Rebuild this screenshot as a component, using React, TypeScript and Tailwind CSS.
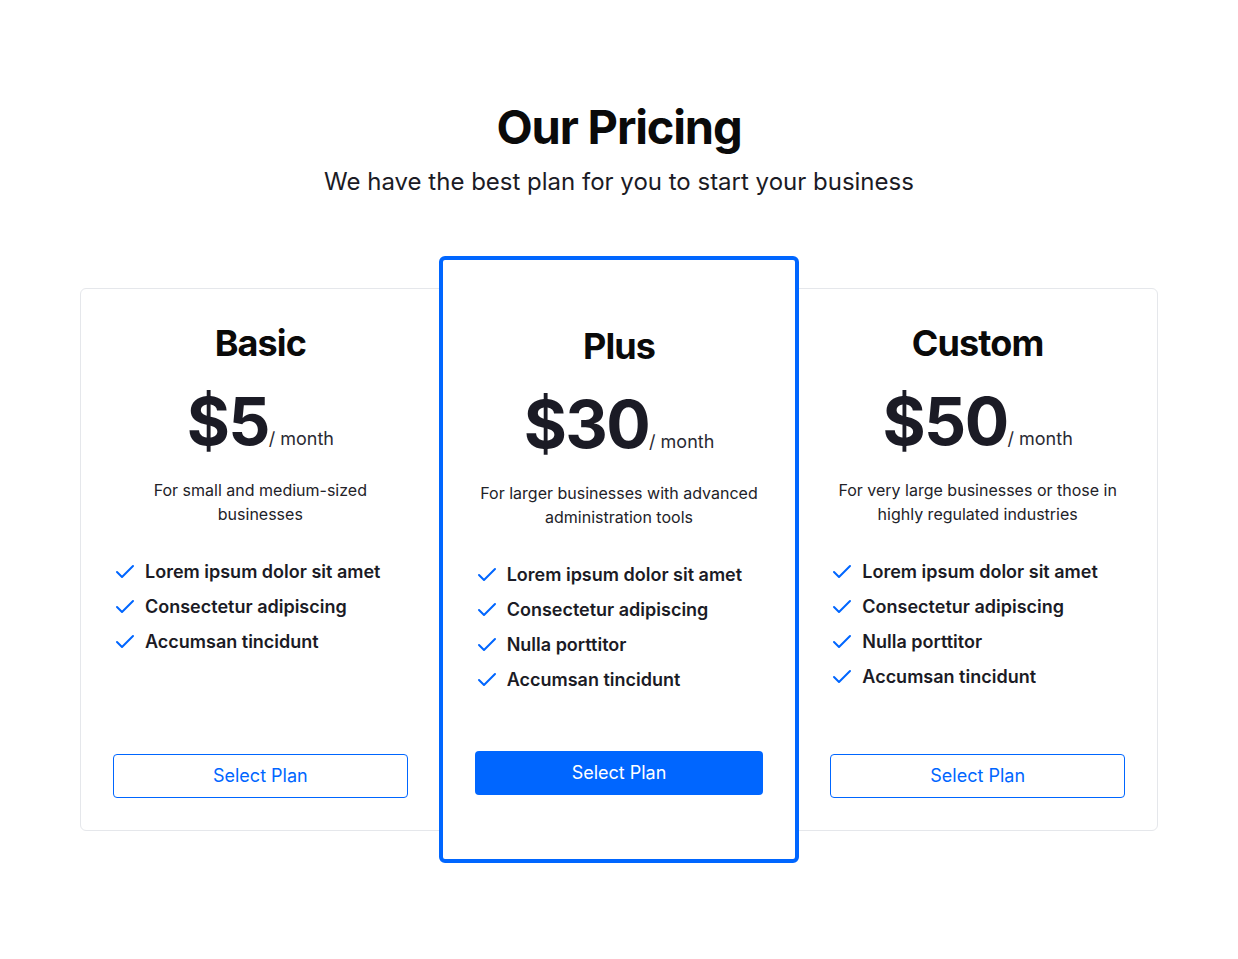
import { Check } from 'lucide-react';

type Plan = {
	name: string;
	price: string;
	description: string;
	features: string[];
	featured?: boolean;
};

const plans: Plan[] = [
	{
		name: 'Basic',
		price: '$5',
		description: 'For small and medium-sized businesses',
		features: ['Lorem ipsum dolor sit amet', 'Consectetur adipiscing', 'Accumsan tincidunt'],
	},
	{
		name: 'Plus',
		price: '$30',
		description: 'For larger businesses with advanced administration tools',
		features: ['Lorem ipsum dolor sit amet', 'Consectetur adipiscing', 'Nulla porttitor', 'Accumsan tincidunt'],
		featured: true,
	},
	{
		name: 'Custom',
		price: '$50',
		description: 'For very large businesses or those in highly regulated industries',
		features: ['Lorem ipsum dolor sit amet', 'Consectetur adipiscing', 'Nulla porttitor', 'Accumsan tincidunt'],
	},
];

function PlanCard({ plan }: { plan: Plan }) {
	return (
		<div
			className={
				plan.featured
					? 'min-w-0 flex flex-col bg-white border-4 border-[#0066ff] rounded-md -my-[33px] -mx-px px-8 pt-16 pb-16'
					: 'min-w-0 flex flex-col px-8 pt-8 pb-8'
			}
		>
			<h3 className="text-center text-[36px] leading-[44px] font-bold tracking-tight text-[#0a0a0a]">{plan.name}</h3>
			<div className="mt-[23px] flex items-baseline justify-center">
				<span className="text-[66px] leading-none font-bold tracking-tight text-[#1b1b25]">{plan.price}</span>
				<span className="text-lg text-[#2a2a33]">/ month</span>
			</div>
			<p className="mt-[24px] text-center text-base leading-6 text-[#222228]">{plan.description}</p>
			<ul className="mt-[32px] flex flex-col gap-[7px]">
				{plan.features.map((f) => (
					<li key={f} className="flex items-center gap-2 text-lg leading-7 font-semibold text-[#1b1b25]">
						<Check className="size-6 shrink-0 text-[#0066ff]" strokeWidth={2} />
						<span>{f}</span>
					</li>
				))}
			</ul>
			<button
				className={
					plan.featured
						? 'mt-auto h-11 w-full rounded-[4px] bg-[#0066ff] text-lg text-white'
						: 'mt-auto h-11 w-full rounded-[4px] border border-[#0066ff] bg-white text-lg text-[#0066ff]'
				}
			>
				Select Plan
			</button>
		</div>
	);
}

export default function App() {
	return (
		<div className="min-h-[959px] bg-white font-['Inter','Liberation_Sans',sans-serif] antialiased">
			<div className="flex flex-col items-center pt-[103px]">
				<h1 className="text-[47px] leading-[48px] font-bold tracking-tight text-[#0a0a0a]">Our Pricing</h1>
				<p className="mt-[15px] text-2xl leading-8 text-[#1b1b25]">We have the best plan for you to start your business</p>
				<div className="mt-[90px] w-[1078px] h-[543px] grid grid-cols-3 border border-gray-200 rounded-md">
					{plans.map((p) => (
						<PlanCard key={p.name} plan={p} />
					))}
				</div>
			</div>
		</div>
	);
}
